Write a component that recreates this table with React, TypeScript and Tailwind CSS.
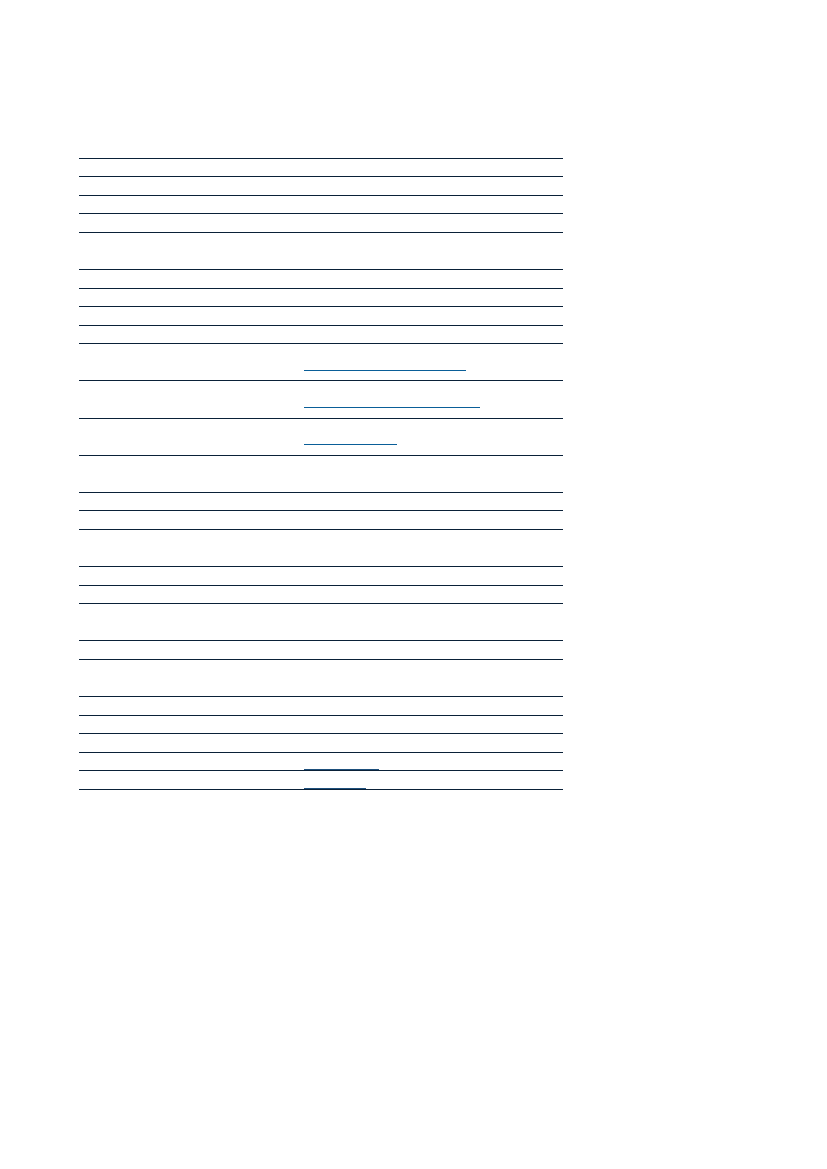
import React from 'react';

type Row = { tall?: boolean; link?: { text: string; w: string; dark?: boolean } };

// Label / value record table; the glyphs do not show in the source, only rules and link underlines
const rows: Row[] = [
  {}, {}, {}, {},
  { tall: true },
  {}, {}, {}, {},
  { tall: true, link: { text: 'https://doi.org/10.5281', w: 'w-[162px]' } },
  { tall: true, link: { text: 'creativecommons.org/licenses', w: 'w-[176px]' } },
  { tall: true, link: { text: 'orcid.org', w: 'w-[93px]' } },
  { tall: true },
  {}, {},
  { tall: true },
  {}, {},
  { tall: true },
  {},
  { tall: true },
  {}, {}, {},
  { link: { text: 'mailto:info', w: 'w-[75px]', dark: true } },
  { link: { text: 'homepage', w: 'w-[62px]', dark: true } },
];

const App: React.FC = () => {
  return (
    <div className="min-h-screen bg-white pt-[157.5px] pl-[79px]" style={{ fontFamily: '"Liberation Sans", Arial, sans-serif' }}>
      <div className="w-[484px] border-t border-[#0a2138]">
        {rows.map((r, i) => (
          <div
            key={i}
            className={`grid grid-cols-[225px_1fr] border-b border-[#0a2138] ${r.tall ? 'h-[37.1px]' : 'h-[18.6px]'}`}
          >
            <div className="flex items-center text-[11px] text-transparent"></div>
            <div className="flex items-center">
              {r.link && (
                <a
                  href="#"
                  className={`block h-[17.5px] overflow-hidden whitespace-nowrap border-b text-[10px] leading-[16px] text-transparent ${r.link.w} ${
                    r.link.dark ? 'border-[#1d4f7c]' : 'border-[#0a5e98]'
                  }`}
                >
                  {r.link.text}
                </a>
              )}
            </div>
          </div>
        ))}
      </div>
    </div>
  );
};

export default App;
